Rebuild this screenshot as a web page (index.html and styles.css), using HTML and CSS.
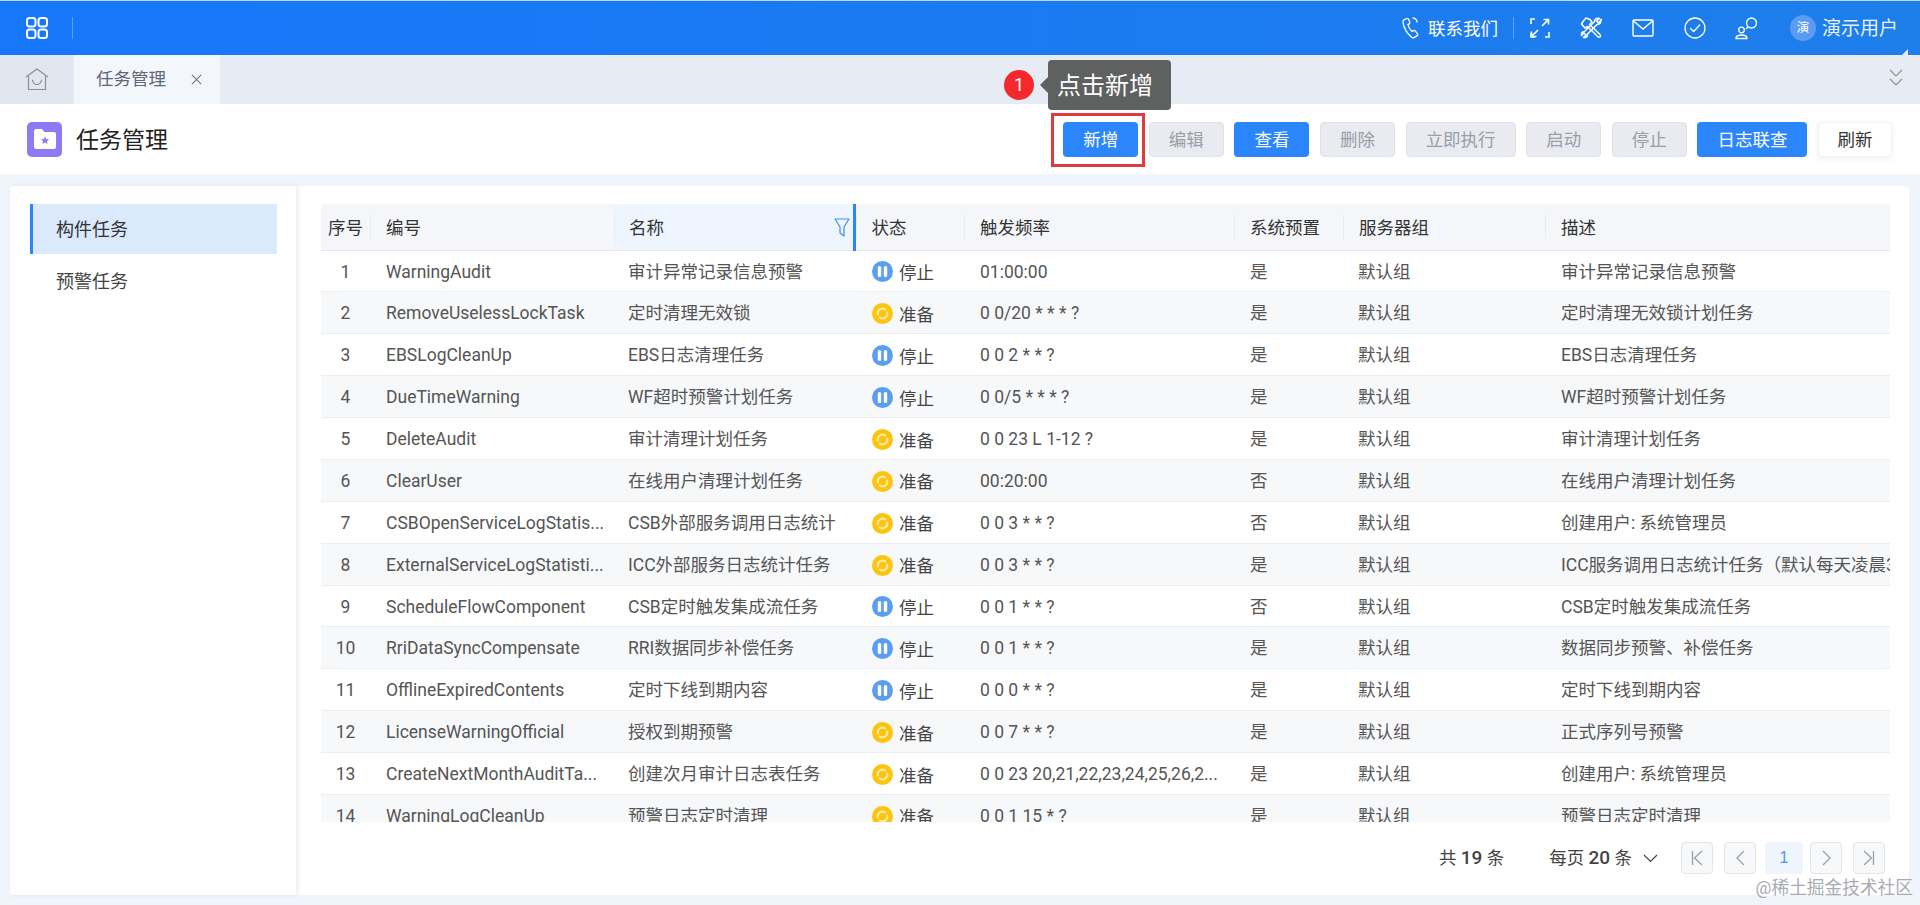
FILE: index.html
```html
<!DOCTYPE html>
<html lang="zh-CN">
<head>
<meta charset="utf-8">
<title>任务管理</title>
<link rel="stylesheet" href="styles.css">
</head>
<body>
<svg class="sprite" width="0" height="0" aria-hidden="true">
  <symbol id="st-stop" viewBox="0 0 21 21"><circle cx="10.500" cy="10.500" r="10.500" fill="#5b9df5"/><rect x="5.800" y="5" width="3.400" height="11" rx="1.500" fill="#fff"/><rect x="11.800" y="5" width="3.400" height="11" rx="1.500" fill="#fff"/></symbol>
  <symbol id="st-ready" viewBox="0 0 21 21"><circle cx="10.500" cy="10.500" r="10.500" fill="#fdc40f"/><path d="M5.800 11.500a4.800 4.800 0 0 1 7.300-5.100M15.200 9.500a4.800 4.800 0 0 1-7.300 5.100" fill="none" stroke="#ffeeb0" stroke-width="2" stroke-linecap="round"/></symbol>
</svg>
<div class="app">
  <header class="topbar">
    <div class="top-left">
      <svg class="apps" width="24" height="24" viewBox="0 0 24 24" fill="none" stroke="#fff" stroke-width="2"><rect x="2" y="2" width="8.5" height="8.5" rx="2.5"/><rect x="13.5" y="2" width="8.5" height="8.5" rx="2.5"/><rect x="2" y="13.5" width="8.5" height="8.5" rx="2.5"/><rect x="13.5" y="13.5" width="8.5" height="8.5" rx="2.5"/></svg>
      <span class="vsep"></span>
    </div>
    <div class="top-right">
      <svg class="i-phone" width="20" height="24" viewBox="0 0 20 24" fill="none" stroke="#fff" stroke-width="1.3" stroke-linecap="round"><path d="M6 2.5 3.2 3.6c-1 .5-1.4 1.5-1.2 2.7.7 4.6 3.7 10.500 8.300 14.700 1 .9 2.200 1 3.200.4l2.700-1.800c.6-.4.7-1.100.3-1.700l-2.300-3c-.4-.5-1-.6-1.600-.3l-1.500.8C8.900 13.400 7.300 10.700 6.900 8.600l1.500-1c.5-.4.6-1 .4-1.500L7.400 3c-.3-.5-.8-.7-1.400-.5Z"/><path d="M12 2c2.300.3 3.800 1.900 4.100 4"/></svg>
      <span class="contact">联系我们</span>
      <span class="vsep"></span>
      <svg class="i-full" width="20" height="20" viewBox="0 0 20 20" fill="none" stroke="#fff" stroke-width="1.600"><path d="M1 6V1h4M19 14v5h-4M5 19H1v-4"/><path d="M12 8l6-6M13.500 1.500h5V6.500M8 12l-6 6M1.500 13.500v5h5"/></svg>
      <svg class="i-tools" width="24" height="24" viewBox="0 0 24 24" fill="none" stroke="#fff" stroke-width="1.500" stroke-linejoin="round"><path d="M3 5.500 6 2l4 1.500 2 2.500-2.500 2.500 10.500 10c.8.8.8 1.600.2 2.300-.7.700-1.600.7-2.300 0L7.500 10.500 5 12 1.500 8Z"/><path d="M21.500 3.500 18.500 7l-2-2 3-2.500c-2.500-1-5 .5-5 3l-10 10c-2 0-3.500 1.500-3 4l2.500-2.500 2 2-2.500 2.500c2.500.5 4.500-1 4-3.500l9.500-9.500c2.500.5 4.500-2 3.500-4.500Z"/></svg>
      <svg class="i-mail" width="22" height="18" viewBox="0 0 22 18" fill="none" stroke="#fff" stroke-width="1.400"><rect x="1" y="1" width="20" height="16" rx="1"/><path d="M1.500 2 11 10l9.500-8"/></svg>
      <svg class="i-check" width="22" height="22" viewBox="0 0 22 22" fill="none" stroke="#fff" stroke-width="1.300"><circle cx="11" cy="11" r="10"/><path d="M6.500 11.500l3.200 3 6-6.500" stroke-linecap="round" stroke-linejoin="round"/></svg>
      <svg class="i-user" width="24" height="24" viewBox="0 0 24 24" fill="none" stroke="#fff" stroke-width="1.300"><circle cx="16.500" cy="7" r="5"/><path d="M13 11 11 13"/><circle cx="6.500" cy="14" r="2.800"/><path d="M1 22.500c0-2.300 2.400-3.500 5.500-3.500s5.500 1.200 5.500 3.500Z"/></svg>
      <span class="avatar">演</span>
      <span class="username">演示用户</span>
      <span class="corner"></span>
    </div>
  </header>

  <nav class="tabs">
    <div class="home-tab">
      <svg width="24" height="23" viewBox="0 0 24 23" fill="none" stroke="#8a8f99" stroke-width="1.200"><path d="M1 9 12 1l11 8"/><path d="M3.500 8v13.500h17V8"/><path d="M7.500 12c.5 3 2.300 4.500 4.500 4.500s4-1.500 4.500-4.500" stroke-linecap="round"/></svg>
    </div>
    <div class="tab-active">
      <span>任务管理</span>
      <svg width="11" height="11" viewBox="0 0 12 12" stroke="#6b7280" stroke-width="1.100"><path d="M1 1l10 10M11 1 1 11"/></svg>
    </div>
    <svg class="tab-more" width="14" height="18" viewBox="0 0 14 18" fill="none" stroke="#8f939b" stroke-width="1.200"><path d="M1 1l6 6 6-6M1 10l6 6 6-6"/></svg>
  </nav>

  <section class="page-head">
    <div class="title-wrap">
      <span class="title-icon">
        <svg width="22" height="22" viewBox="0 0 22 22"><path d="M0 3a2 2 0 0 1 2-2h6l2.500 3H20a2 2 0 0 1 2 2v13a2 2 0 0 1-2 2H2a2 2 0 0 1-2-2Z" fill="#fff"/><path d="M11 8.500l1.200 2.500 2.800.3-2 1.900.5 2.800-2.500-1.400-2.500 1.400.5-2.800-2-1.900 2.800-.3Z" fill="#8c7bf5"/></svg>
      </span>
      <h1>任务管理</h1>
    </div>
    <div class="actions">
      <button class="btn primary">新增</button>
      <button class="btn disabled">编辑</button>
      <button class="btn primary">查看</button>
      <button class="btn disabled">删除</button>
      <button class="btn disabled wide">立即执行</button>
      <button class="btn disabled">启动</button>
      <button class="btn disabled">停止</button>
      <button class="btn primary wide">日志联查</button>
      <button class="btn plain">刷新</button>
    </div>
  </section>

  <main class="panel">
    <aside class="side">
      <div class="menu-item active">构件任务</div>
      <div class="menu-item">预警任务</div>
    </aside>
    <div class="content">
      <div class="table-clip">
        <table class="grid">
          <colgroup>
            <col class="c-no"><col class="c-code"><col class="c-name"><col class="c-state"><col class="c-freq"><col class="c-sys"><col class="c-group"><col class="c-desc">
          </colgroup>
          <thead>
            <tr>
              <th class="no">序号</th>
              <th>编号</th>
              <th class="sorted">名称
                <svg class="funnel" width="16" height="19" viewBox="0 0 16 19" fill="none" stroke="#3f8ef5" stroke-width="1.200" stroke-linejoin="round"><path d="M1 1h14L10 9v9l-4-3V9Z"/></svg>
              </th>
              <th>状态</th>
              <th>触发频率</th>
              <th>系统预置</th>
              <th>服务器组</th>
              <th>描述</th>
            </tr>
          </thead>
          <tbody>
            <tr><td class="no">1</td><td>WarningAudit</td><td>审计异常记录信息预警</td><td><span class="state"><svg class="dot"><use href="#st-stop"/></svg>停止</span></td><td>01:00:00</td><td>是</td><td>默认组</td><td>审计异常记录信息预警</td></tr>
            <tr><td class="no">2</td><td>RemoveUselessLockTask</td><td>定时清理无效锁</td><td><span class="state"><svg class="dot"><use href="#st-ready"/></svg>准备</span></td><td>0 0/20 * * * ?</td><td>是</td><td>默认组</td><td>定时清理无效锁计划任务</td></tr>
            <tr><td class="no">3</td><td>EBSLogCleanUp</td><td>EBS日志清理任务</td><td><span class="state"><svg class="dot"><use href="#st-stop"/></svg>停止</span></td><td>0 0 2 * * ?</td><td>是</td><td>默认组</td><td>EBS日志清理任务</td></tr>
            <tr><td class="no">4</td><td>DueTimeWarning</td><td>WF超时预警计划任务</td><td><span class="state"><svg class="dot"><use href="#st-stop"/></svg>停止</span></td><td>0 0/5 * * * ?</td><td>是</td><td>默认组</td><td>WF超时预警计划任务</td></tr>
            <tr><td class="no">5</td><td>DeleteAudit</td><td>审计清理计划任务</td><td><span class="state"><svg class="dot"><use href="#st-ready"/></svg>准备</span></td><td>0 0 23 L 1-12 ?</td><td>是</td><td>默认组</td><td>审计清理计划任务</td></tr>
            <tr><td class="no">6</td><td>ClearUser</td><td>在线用户清理计划任务</td><td><span class="state"><svg class="dot"><use href="#st-ready"/></svg>准备</span></td><td>00:20:00</td><td>否</td><td>默认组</td><td>在线用户清理计划任务</td></tr>
            <tr><td class="no">7</td><td>CSBOpenServiceLogStatis...</td><td>CSB外部服务调用日志统计</td><td><span class="state"><svg class="dot"><use href="#st-ready"/></svg>准备</span></td><td>0 0 3 * * ?</td><td>否</td><td>默认组</td><td>创建用户: 系统管理员</td></tr>
            <tr><td class="no">8</td><td>ExternalServiceLogStatisti...</td><td>ICC外部服务日志统计任务</td><td><span class="state"><svg class="dot"><use href="#st-ready"/></svg>准备</span></td><td>0 0 3 * * ?</td><td>是</td><td>默认组</td><td>ICC服务调用日志统计任务（默认每天凌晨3</td></tr>
            <tr><td class="no">9</td><td>ScheduleFlowComponent</td><td>CSB定时触发集成流任务</td><td><span class="state"><svg class="dot"><use href="#st-stop"/></svg>停止</span></td><td>0 0 1 * * ?</td><td>否</td><td>默认组</td><td>CSB定时触发集成流任务</td></tr>
            <tr><td class="no">10</td><td>RriDataSyncCompensate</td><td>RRI数据同步补偿任务</td><td><span class="state"><svg class="dot"><use href="#st-stop"/></svg>停止</span></td><td>0 0 1 * * ?</td><td>是</td><td>默认组</td><td>数据同步预警、补偿任务</td></tr>
            <tr><td class="no">11</td><td>OfflineExpiredContents</td><td>定时下线到期内容</td><td><span class="state"><svg class="dot"><use href="#st-stop"/></svg>停止</span></td><td>0 0 0 * * ?</td><td>是</td><td>默认组</td><td>定时下线到期内容</td></tr>
            <tr><td class="no">12</td><td>LicenseWarningOfficial</td><td>授权到期预警</td><td><span class="state"><svg class="dot"><use href="#st-ready"/></svg>准备</span></td><td>0 0 7 * * ?</td><td>是</td><td>默认组</td><td>正式序列号预警</td></tr>
            <tr><td class="no">13</td><td>CreateNextMonthAuditTa...</td><td>创建次月审计日志表任务</td><td><span class="state"><svg class="dot"><use href="#st-ready"/></svg>准备</span></td><td>0 0 23 20,21,22,23,24,25,26,2...</td><td>是</td><td>默认组</td><td>创建用户: 系统管理员</td></tr>
            <tr><td class="no">14</td><td>WarningLogCleanUp</td><td>预警日志定时清理</td><td><span class="state"><svg class="dot"><use href="#st-ready"/></svg>准备</span></td><td>0 0 1 15 * ?</td><td>是</td><td>默认组</td><td>预警日志定时清理</td></tr>
          </tbody>
        </table>
      </div>
      <div class="pager">
        <span class="total">共 <b>19</b> 条</span>
        <span class="size">每页 <b>20</b> 条</span>
        <svg class="size-caret" width="15" height="9" viewBox="0 0 15 9" fill="none" stroke="#444" stroke-width="1.200"><path d="M1 1l6.500 6.500L14 1"/></svg>
        <span class="pg"><svg width="12" height="16" viewBox="0 0 12 16" fill="none" stroke="#9a9ea6" stroke-width="1.300"><path d="M1.500 1v14M11 1 3.500 8l7.500 7"/></svg></span>
        <span class="pg"><svg width="9" height="16" viewBox="0 0 9 16" fill="none" stroke="#9a9ea6" stroke-width="1.300"><path d="M8 1 1 8l7 7"/></svg></span>
        <span class="pg current">1</span>
        <span class="pg"><svg width="9" height="16" viewBox="0 0 9 16" fill="none" stroke="#9a9ea6" stroke-width="1.300"><path d="M1 1l7 7-7 7"/></svg></span>
        <span class="pg"><svg width="12" height="16" viewBox="0 0 12 16" fill="none" stroke="#9a9ea6" stroke-width="1.300"><path d="M10.500 1v14M1 1l7.500 7L1 15"/></svg></span>
      </div>
    </div>
  </main>
</div>

<div class="step-badge">1</div>
<div class="step-tip">点击新增</div>
<div class="step-box"></div>
<div class="watermark">@稀土掘金技术社区</div>
</body>
</html>
```

FILE: styles.css
```css
* { box-sizing: border-box; }
html, body { margin: 0; padding: 0; height: 100%; }
body {
  position: relative;
  overflow: hidden;
  background: #f0f4fb;
  color: #555;
  font: 17.5px/1.4 Roboto, "Noto Sans CJK SC", "Liberation Sans", sans-serif;
}
.sprite { position: absolute; }
.app { display: flex; flex-direction: column; height: 905px; }

/* top bar */
.topbar {
  flex: none;
  height: 55px;
  display: flex;
  align-items: center;
  justify-content: space-between;
  border-top: 1px solid #bcd6f7;
  background: linear-gradient(90deg, #1677fb, #1e7eea);
  color: #fff;
}
.top-left { display: flex; align-items: center; padding-left: 25px; }
.top-left .vsep { margin-left: 23px; }
.vsep { display: block; width: 1px; height: 22px; background: rgba(255,255,255,.3); }
.top-right { position: relative; display: flex; align-items: center; padding-right: 22px; }
.contact { margin-left: 7px; padding-top: 2px; width: 71px; white-space: nowrap; font-size: 17.5px; }
.top-right .vsep { margin-left: 14px; }
.i-full { margin-left: 16px; }
.i-tools { margin-left: 30px; }
.i-mail { margin-left: 28px; }
.i-check { margin-left: 30px; }
.i-user { margin-left: 29px; }
.avatar {
  margin-left: 31px;
  width: 26px;
  height: 26px;
  border-radius: 50%;
  background: #5b9cf2;
  font-size: 12.5px;
  line-height: 26px;
  text-align: center;
}
.username { margin-left: 6px; padding-top: 2px; font-size: 19px; white-space: nowrap; color: #e9f2fd; }
.corner {
  position: absolute;
  right: 12px;
  bottom: -15px;
  width: 0;
  height: 0;
  border-style: solid;
  border-width: 0 0 8px 8px;
  border-color: transparent transparent #e6eefb transparent;
}

/* tabs */
.tabs {
  flex: none;
  height: 49px;
  display: flex;
  background: #e7ebf3;
  align-items: stretch;
}
.home-tab {
  width: 73px;
  display: flex;
  align-items: center;
  justify-content: center;
  background: #e2e6ee;
  margin-right: 1px;
}
.tab-active {
  width: 146px;
  display: flex;
  align-items: center;
  padding-left: 22px;
  gap: 25px;
  background: #f3f6fa;
  color: #5f6778;
}
.tab-more { margin: 14px 17px 0 auto; }

/* page head */
.page-head {
  flex: none;
  height: 70px;
  display: flex;
  align-items: center;
  justify-content: space-between;
  background: #fff;
  padding: 0 28px 0 27px;
}
.title-wrap { display: flex; align-items: center; }
.title-icon {
  width: 35px;
  height: 35px;
  display: flex;
  align-items: center;
  justify-content: center;
  border-radius: 5px;
  background: #8c7bf5;
}
h1 { margin: 0 0 0 14px; padding-top: 4px; font-size: 23px; font-weight: 400; color: #222; line-height: 1.400; }
.actions { display: flex; gap: 10.600px; }
.btn {
  width: 75px;
  height: 35px;
  padding: 4px 0 0;
  border: 1px solid transparent;
  border-radius: 4px;
  font: inherit;
  line-height: 1;
}
.btn.wide { width: 110px; }
.primary { background: #2b85fb; color: #fff; }
.disabled { background: #e9ebf0; border-color: #dfe2e8; color: #9a9ea6; }
.btn.plain { width: 74px; background: #fff; border-color: #f0f1f4; color: #333; box-shadow: 0 2px 6px rgba(60,80,120,.08); }

/* panel */
.panel {
  flex: 1;
  min-height: 0;
  display: flex;
  margin: 12px 11px 10px 10px;
  background: #fff;
  border-radius: 4px;
}
.side {
  flex: none;
  width: 286px;
  padding: 18px 19px 0 20px;
  box-shadow: 2px 0 4px rgba(60,80,120,.1);
}
.menu-item {
  height: 50px;
  line-height: 48px;
  padding: 4px 0 0 26px;
  font-size: 18px;
  color: #444;
}
.menu-item.active { background: #dae9fc; border-left: 3px solid #2b85fb; padding: 2px 0 0 23px; color: #333; }
.content { flex: 1; min-width: 0; padding: 18px 19px 0 25px; }
.table-clip { height: 618px; overflow: hidden; }

/* table */
.grid { width: 1569px; table-layout: fixed; border-collapse: collapse; }
.c-no { width: 49px; }
.c-code { width: 244px; }
.c-name { width: 240px; }
.c-state { width: 110px; }
.c-freq { width: 270px; }
.c-sys { width: 109px; }
.c-group { width: 202px; }
.c-desc { width: 345px; }
.grid th {
  position: relative;
  height: 46px;
  padding: 2px 0 0 16px;
  background: #f4f6fa;
  border-bottom: 1px solid #e4e7ed;
  font-weight: 400;
  color: #333;
  text-align: left;
  white-space: nowrap;
}
.grid th + th::before {
  content: "";
  position: absolute;
  left: 0;
  top: 11px;
  bottom: 11px;
  width: 1px;
  background: #e8ebf0;
}
.grid th.no, .grid td.no {
  padding: 2px 0 0;
  text-align: center;
  box-shadow: 4px 0 5px -2px rgba(60,80,120,.1);
}
.grid th.sorted { background: #eef5fe; padding-left: 15px; border-right: 3px solid #2b85fb; }
.funnel { position: absolute; right: 3px; top: 14px; }
.grid td {
  height: 41.875px;
  padding: 2px 0 0 16px;
  border-bottom: 1px solid #eceef2;
  white-space: nowrap;
  overflow: hidden;
  line-height: 1.3;
}
.grid td:nth-child(3) { padding-left: 14px; }
.grid td:nth-child(4) { padding-left: 18px; }
.grid td:nth-child(7) { padding-left: 15px; }
.grid tbody tr:nth-child(even) td { background: #f7f8fa; }
.state { display: flex; align-items: center; gap: 6px; padding-top: 3px; color: #444; }
.dot { flex: none; display: block; width: 21px; height: 21px; margin-top: -3px; }

/* pager */
.pager {
  display: flex;
  align-items: center;
  justify-content: flex-end;
  margin-top: 20px;
  padding-right: 5px;
  height: 32px;
  color: #444;
}
.pager b { font-size: 19px; font-weight: 500; }
.total { margin-right: 45px; white-space: pre; }
.size { white-space: pre; }
.size-caret { margin: 0 12px 0 11px; }
.pg {
  display: flex;
  align-items: center;
  justify-content: center;
  width: 32px;
  height: 32px;
  margin-left: 11px;
  border: 1px solid #e3e5ea;
  border-radius: 4px;
  background: #f7f8fa;
}
.pg.current {
  width: 38px;
  margin: 0 -4px 0 9px;
  border-color: transparent;
  background: #f0f5fc;
  color: #4b94f4;
  font-size: 16px;
  font-family: "Liberation Sans", sans-serif;
}

/* overlays */
.step-badge {
  position: absolute;
  left: 1004px;
  top: 70px;
  width: 30px;
  height: 30px;
  border-radius: 50%;
  background: #f5282d;
  color: #fff;
  font-size: 18px;
  line-height: 30px;
  text-align: center;
}
.step-tip {
  position: absolute;
  left: 1048px;
  top: 60px;
  width: 123px;
  height: 50px;
  padding-left: 9px;
  border-radius: 4px;
  background: #5f6060;
  color: #fff;
  font-size: 24px;
  line-height: 53px;
}
.step-tip::before {
  content: "";
  position: absolute;
  left: -8px;
  top: 17px;
  border-style: solid;
  border-width: 8px 8px 8px 0;
  border-color: transparent #5f6060 transparent transparent;
}
.step-box {
  position: absolute;
  left: 1051px;
  top: 113px;
  width: 94px;
  height: 54px;
  border: 3px solid #e2393b;
}
.watermark {
  position: absolute;
  right: 7px;
  bottom: 6px;
  color: #a9abb0;
  font-size: 17.700px;
  line-height: 1.2;
  white-space: nowrap;
}
```
